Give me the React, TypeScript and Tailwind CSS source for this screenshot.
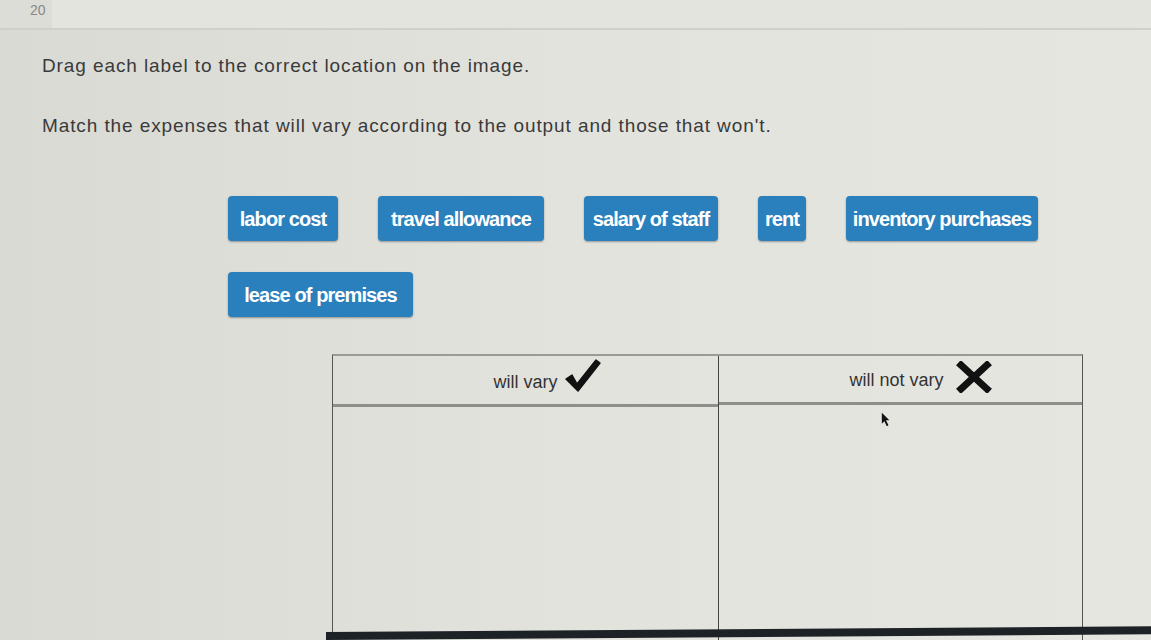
import { useState } from 'react'

const labels = [
  { text: 'labor cost', w: 'w-[110px]' },
  { text: 'travel allowance', w: 'w-[166px]' },
  { text: 'salary of staff', w: 'w-[134px]' },
  { text: 'rent', w: 'w-[48px]' },
  { text: 'inventory purchases', w: 'w-[192px]' },
  { text: 'lease of premises', w: 'w-[185px]' },
]

function CheckMark() {
  return (
    <svg viewBox="0 0 40 36" className="w-[40px] h-[36px]">
      <path
        d="M4 22 L10 18 L15 27 L34 3 L38 6 L16 34 Z"
        fill="#111"
        stroke="#111"
        strokeWidth="1.5"
        strokeLinejoin="round"
      />
    </svg>
  )
}

function Cross() {
  return (
    <svg viewBox="0 0 36 32" className="w-[36px] h-[32px]">
      <path d="M5 4 L31 28 M31 4 L5 28" stroke="#111" strokeWidth="7" strokeLinecap="square" />
    </svg>
  )
}

function Cursor() {
  return (
    <svg viewBox="0 0 12 18" className="w-[10px] h-[15px]">
      <path d="M1 1 L1 14 L4 11 L7 17 L9 16 L6 10 L10 10 Z" fill="#111" />
    </svg>
  )
}

export default function App() {
  const [placed] = useState<string[]>([])

  return (
    <div className="relative w-[1151px] h-[640px] overflow-hidden bg-gradient-to-r from-[#d9dad4] via-[#e3e3de] to-[#e6e6e1] font-['Liberation_Sans',Arial,sans-serif] text-[#3a3a3a]">
      {/* question number strip */}
      <div className="h-[30px] flex border-b-2 border-[#cfd0ca] bg-[#e4e4df]">
        <div className="w-[52px] bg-[#dcddd7] overflow-hidden">
          <span className="block mt-[2px] ml-[30px] text-[14px] leading-[16px] text-[#888]">20</span>
        </div>
      </div>

      <div className="pl-[42px] pt-[23px]">
        <p className="text-[19px] tracking-[0.9px] leading-[26px]">
          Drag each label to the correct location on the image.
        </p>
        <p className="mt-[34px] text-[19px] tracking-[0.9px] leading-[26px]">
          Match the expenses that will vary according to the output and those that won't.
        </p>
      </div>

      {/* draggable labels */}
      <div className="ml-[228px] mt-[57px] w-[812px] flex flex-wrap gap-x-[40px] gap-y-[31px]">
        {labels
          .filter((l) => !placed.includes(l.text))
          .map((l) => (
            <div
              key={l.text}
              className={`${l.w} h-[45px] rounded-[4px] bg-[#2a80bd] shadow-[0_1px_2px_rgba(0,0,0,0.35)] flex items-center justify-center text-white font-bold text-[20px] tracking-[-0.9px] whitespace-nowrap`}
            >
              {l.text}
            </div>
          ))}
      </div>

      {/* drop table */}
      <div className="ml-[332px] mt-[37px] w-[751px] h-[300px] border-l border-r border-[#555] border-t-2 border-t-[#9a9a96] grid grid-cols-[386px_1fr]">
        <div className="border-r border-[#444] flex flex-col">
          <div className="h-[51px] border-b-[3px] border-[#8e8f8b] flex items-center justify-center">
            <span className="relative text-[18px] text-[#333] mt-[4px]">
              will vary
              <span className="absolute left-full top-[-12px] ml-[4px]">
                <CheckMark />
              </span>
            </span>
          </div>
          <div className="flex-1" />
        </div>
        <div className="flex flex-col">
          <div className="h-[49px] border-b-[3px] border-[#8e8f8b] flex items-center justify-center">
            <span className="relative text-[18px] text-[#333] -ml-[8px] mt-[2px]">
              will not vary
              <span className="absolute left-full top-[-6px] ml-[12px]">
                <Cross />
              </span>
            </span>
          </div>
          <div className="relative flex-1">
            <span className="absolute left-[162px] top-[7px]">
              <Cursor />
            </span>
          </div>
        </div>
      </div>

      {/* monitor bezel at the bottom edge */}
      <div className="absolute left-[326px] right-0 bottom-0 h-[8px] bg-[#1d2226] -skew-y-[0.4deg] origin-left" />
    </div>
  )
}
